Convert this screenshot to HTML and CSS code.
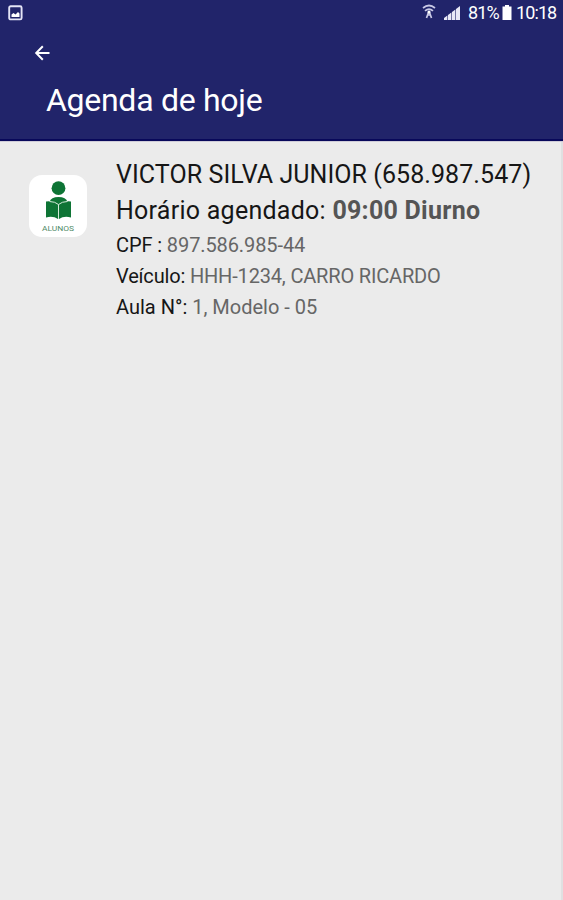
FILE: index.html
```html
<!DOCTYPE html>
<html lang="pt-BR">
<head>
  <meta charset="utf-8">
  <title>Agenda de hoje</title>
  <link rel="stylesheet" href="styles.css">
</head>
<body>
  <div class="header">
    <div class="status-bar">
      <svg class="icon-picture" width="15" height="16" viewBox="0 0 15 16">
        <rect x="1.2" y="1.2" width="12.4" height="13.2" rx="1.5" fill="none" stroke="#e4e4f6" stroke-width="1.9"/>
        <path d="M3.5 12V9.5L5.5 8l2 1.5L10 7l1.5 1.5V12z" fill="#fff"/>
      </svg>
      <div class="status-right">
        <svg class="icon-wifi" width="14" height="16" viewBox="0 0 14 16" fill="none" stroke="#c9c9e6" stroke-width="1.7">
          <path d="M1 4Q7-1 13 4M3 6.8Q7 3.300 11 6.800"/>
          <path d="M7 7L4.5 14M7 7l2.500 7M5.500 11l3 0"/>
          <circle cx="7" cy="8" r="1.500" fill="#fff" stroke="none"/>
        </svg>
        <svg class="icon-signal" width="17" height="15" viewBox="0 0 17 15" fill="#e8e8f6">
          <path d="M0 14v-2l3.400-2.500V14zM4 14V9l3.400-2.500V14zM8 14V6l3.400-2.500V14zM12 14V3l4-3v14z"/>
        </svg>
        <span class="battery-level">81%</span>
        <svg class="icon-battery" width="10" height="15" viewBox="0 0 10 15" fill="#fff">
          <path d="M3 0h4v1.500h2.500V15h-9V1.500H3z"/>
        </svg>
        <span class="clock">10:18</span>
      </div>
    </div>
    <svg class="icon-back" width="16" height="16" viewBox="0 0 16 16" fill="none" stroke="#fff" stroke-width="2">
      <path d="M15.500 8H2.500M8.800 1.200L2.200 8l6.600 6.800"/>
    </svg>
    <h1>Agenda de hoje</h1>
  </div>

  <div class="content">
    <div class="avatar">
      <svg width="58" height="62" viewBox="0 0 58 62">
        <g fill="#0e7435">
          <circle cx="29.500" cy="13.200" r="6.900"/>
          <path d="M20.500 27Q22 22 29.500 22T38.500 27L29.500 30z"/>
          <path d="M17 26.500Q24.500 25.500 29 29.500V44Q24 40.500 17 42.500z"/>
          <path d="M42 26.500Q34.500 25.500 30 29.500V44Q35 40.500 42 42.500z"/>
        </g>
        <path d="M20.500 26.500Q26 26.500 29.500 29.500Q33 26.500 38.500 26.500M29.500 29.500V44" fill="none" stroke="#d4ead9" stroke-width="1"/>
        <text class="avatar-label" x="13" y="56" textLength="32" lengthAdjust="spacingAndGlyphs">ALUNOS</text>
      </svg>
    </div>
    <div class="info">
      <div class="line-big name">VICTOR SILVA JUNIOR (658.987.547)</div>
      <div class="line-big time">Horário agendado: <b>09:00 Diurno</b></div>
      <div class="line cpf">CPF : <span>897.586.985-44</span></div>
      <div class="line car">Veículo: <span>HHH-1234, CARRO RICARDO</span></div>
      <div class="line">Aula N°: <span>1, Modelo - 05</span></div>
    </div>
  </div>
</body>
</html>
```
FILE: styles.css
```css
body {
  margin: 0;
  background-color: #ebebeb;
  font-family: Roboto, sans-serif;
  color: #161616;
}
.header {
  height: 141px;
  box-sizing: border-box;
  border-bottom: 2px solid #08085a;
  background-color: #21246a;
  color: #fff;
}
.status-bar {
  display: flex;
  justify-content: space-between;
  height: 26px;
  padding: 0 8px 0 8px;
}
.icon-picture {
  margin-top: 5px;
}
.status-right {
  display: flex;
  font-size: 18px;
  line-height: 26px;
}
.icon-wifi {
  margin: 4px 8px 0 0;
}
.icon-signal {
  margin: 6px 7px 0 0;
}
.icon-battery {
  margin: 5px 4px 0 4px;
}
.battery-level {
  width: 30px;
  letter-spacing: -0.9px;
}
.clock {
  width: 39px;
  letter-spacing: -0.9px;
}
.icon-back {
  display: block;
  margin: 19px 0 0 34px;
}
h1 {
  margin: 19px 0 0 46px;
  font-size: 32px;
  font-weight: normal;
  line-height: 40px;
  letter-spacing: -0.28px;
  white-space: nowrap;
}
.content {
  display: flex;
  min-height: 759px;
  box-sizing: border-box;
  padding: 15px 0 0 29px;
  border-top: 1px solid #cfccd8;
  box-shadow: inset -2px 0 #e0e0e1;
}
.avatar {
  width: 58px;
  height: 62px;
  margin: 18px 29px 0 0;
  border-radius: 13px;
  background-color: #fff;
}
.avatar svg {
  display: block;
}
.avatar-label {
  font-size: 7.5px;
  fill: #4f8b68;
}
.info {
  white-space: nowrap;
}
.line-big {
  font-size: 25px;
  line-height: 36px;
}
.line-big b {
  color: #555;
}
.name {
  letter-spacing: 0.07px;
}
.time {
  margin-bottom: 1px;
  letter-spacing: 0.26px;
}
.line {
  font-size: 20px;
  line-height: 31px;
}
.line span {
  color: #666;
}
.cpf {
  letter-spacing: -0.1px;
}
.car {
  letter-spacing: -0.17px;
}
```
